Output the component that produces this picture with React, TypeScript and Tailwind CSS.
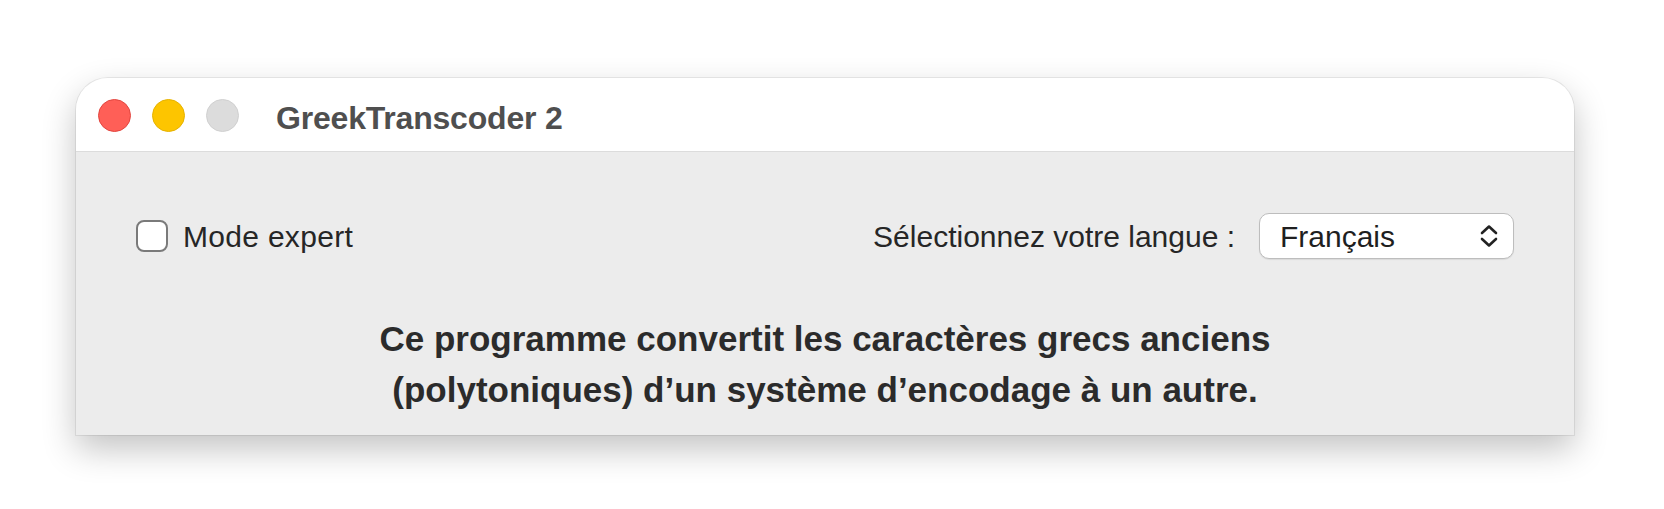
import React from "react";

function Chevrons() {
  return (
    <svg width="18" height="24" viewBox="0 0 18 24" fill="none">
      <polyline
        points="2,9 9,2.5 16,9"
        stroke="#222"
        strokeWidth="2.6"
        strokeLinecap="round"
        strokeLinejoin="round"
      />
      <polyline
        points="2,15 9,21.5 16,15"
        stroke="#222"
        strokeWidth="2.6"
        strokeLinecap="round"
        strokeLinejoin="round"
      />
    </svg>
  );
}

function TitleBar() {
  return (
    <div className="h-[74px] flex items-center pl-[22px] pt-[2px] bg-white rounded-t-[32px] border-b border-[#dcdcdc]">
      {/* traffic lights */}
      <div className="flex items-center gap-[21px]">
        <span className="w-[33px] h-[33px] rounded-full bg-[#ff5f57] border border-[#e2463f]" />
        <span className="w-[33px] h-[33px] rounded-full bg-[#fdc500] border border-[#e6b200]" />
        <span className="w-[33px] h-[33px] rounded-full bg-[#dcdcdc] border border-[#d0d0d0]" />
      </div>
      <h1 className="ml-[37px] mt-[4px] text-[32px] font-bold text-[#4f4f4f] leading-none tracking-[-0.2px]">
        GreekTranscoder 2
      </h1>
    </div>
  );
}

export default function App() {
  return (
    <div
      className="w-[1664px] h-[509px] bg-white pt-[78px] pl-[76px]"
      style={{fontFamily: '"Liberation Sans", Arial, sans-serif'}}
    >
      <div className="w-[1498px] h-[357px] flex flex-col rounded-t-[32px] bg-[#ececec] shadow-[0_0_0_1px_rgba(0,0,0,0.07),0_14px_34px_rgba(0,0,0,0.24)]">
        <TitleBar />

        <div className="flex-1 flex flex-col px-[60px] pt-[61px]">
          {/* top row */}
          <div className="h-[46px] flex items-center justify-between">
            <label className="flex items-center gap-[15px] text-[30px] tracking-[0.3px] text-[#262626]">
              <span className="w-[32px] h-[32px] rounded-[8px] bg-white border-[2.5px] border-[#7a7a7a]" />
              Mode expert
            </label>
            <div className="flex items-center gap-[24px]">
              <span className="text-[30px] text-[#262626]">Sélectionnez votre langue :</span>
              <div className="w-[255px] h-[46px] flex items-center justify-between pl-[20px] pr-[15px] bg-white rounded-[10px] border border-[#bdbdbd] shadow-[0_1px_1px_rgba(0,0,0,0.08)]">
                <span className="text-[30px] text-[#1f1f1f]">Français</span>
                <Chevrons />
              </div>
            </div>
          </div>

          {/* description */}
          <p className="mt-[54px] text-center text-[35px] leading-[51px] font-bold text-[#2b2b2b]">
            Ce programme convertit les caractères grecs anciens
            <br />
            (polytoniques) d’un système d’encodage à un autre.
          </p>
        </div>
      </div>
    </div>
  );
}
